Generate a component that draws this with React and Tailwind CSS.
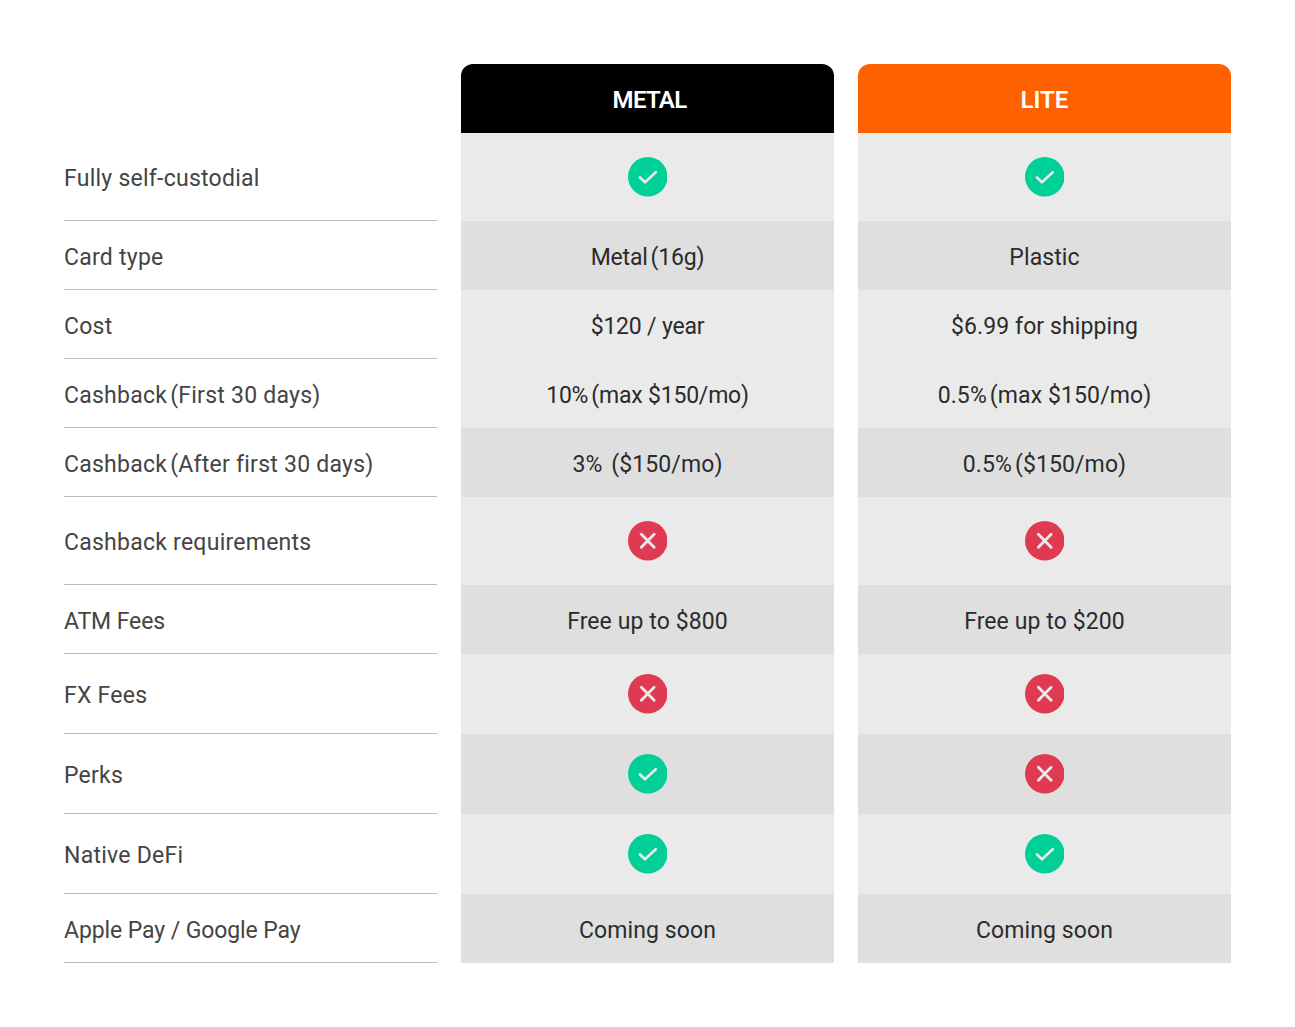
import React from 'react'

const rows = [
  { label: 'Fully self-custodial', metal: 'yes', lite: 'yes', h: 'h-[88px]', band: 'bg-[#eaeaea]' },
  { label: 'Card type', metal: 'Metal (16g)', lite: 'Plastic', h: 'h-[69px]', band: 'bg-[#dfdfdf]', tightMetal: true },
  { label: 'Cost', metal: '$120 / year', lite: '$6.99 for shipping', h: 'h-[69px]', band: 'bg-[#eaeaea]', tightMetal: true },
  { label: 'Cashback (First 30 days)', metal: '10% (max $150/mo)', lite: '0.5% (max $150/mo)', h: 'h-[69px]', band: 'bg-[#eaeaea]', tightMetal: true },
  { label: 'Cashback (After first 30 days)', metal: '3%  ($150/mo)', lite: '0.5% ($150/mo)', h: 'h-[69px]', band: 'bg-[#dfdfdf]' },
  { label: 'Cashback requirements', metal: 'no', lite: 'no', h: 'h-[88px]', band: 'bg-[#eaeaea]' },
  { label: 'ATM Fees', metal: 'Free up to $800', lite: 'Free up to $200', h: 'h-[69px]', band: 'bg-[#dfdfdf]', tightLabel: true },
  { label: 'FX Fees', metal: 'no', lite: 'no', h: 'h-[80px]', band: 'bg-[#eaeaea]' },
  { label: 'Perks', metal: 'yes', lite: 'no', h: 'h-[80px]', band: 'bg-[#dfdfdf]' },
  { label: 'Native DeFi', metal: 'yes', lite: 'yes', h: 'h-[80px]', band: 'bg-[#eaeaea]' },
  { label: 'Apple Pay / Google Pay', metal: 'Coming soon', lite: 'Coming soon', h: 'h-[69px]', band: 'bg-[#dfdfdf]', tightLabel: true },
]

const YesIcon = () => (
  <svg width="39.5" height="39.5" viewBox="0 0 39 39">
    <circle cx="19.5" cy="19.5" r="19.5" fill="#00cf98" />
    <path d="M11.8 20.2l5 4.8 10.6-10" fill="none" stroke="#eaeaea" strokeWidth="2.6" strokeLinecap="round" strokeLinejoin="round" />
  </svg>
)

const NoIcon = () => (
  <svg width="39.5" height="39.5" viewBox="0 0 39 39">
    <circle cx="19.5" cy="19.5" r="19.5" fill="#e03a52" />
    <path d="M13.2 13.2l12.6 12.6M25.8 13.2l-12.6 12.6" fill="none" stroke="#eaeaea" strokeWidth="2.8" strokeLinecap="round" />
  </svg>
)

// the space before a bracket is much tighter in the original type
const Text = ({ value }) => {
  const parts = value.split(' (')
  if (parts.length === 1) return <span>{value}</span>
  return (
    <span>
      {parts[0]}
      <span className="ml-[3px]">({parts[1]}</span>
    </span>
  )
}

const Cell = ({ value, h, band, tight }) => (
  <div className={`${h} ${band} flex items-center justify-center text-[23px] text-[#2b2b2b] whitespace-pre ${tight ? 'tracking-[-0.2px]' : 'tracking-[0.1px]'}`}>
    {value === 'yes' ? <YesIcon /> : value === 'no' ? <NoIcon /> : <span className="pt-[5px]"><Text value={value} /></span>}
  </div>
)

export default function App() {
  return (
    <div className="min-h-[1027px] bg-white pl-16 pt-16 font-['Roboto',sans-serif]">
      <div className="grid w-[1167px] grid-cols-[373px_373px_373px] gap-x-6">
        <div className="h-[69px]" />
        <div className="flex h-[69px] items-center justify-center rounded-t-xl bg-black pl-1 pt-[2px] text-2xl font-semibold tracking-[-0.7px] text-white">METAL</div>
        <div className="flex h-[69px] items-center justify-center rounded-t-xl bg-[#ff6000] pt-[2px] text-2xl font-semibold text-white">LITE</div>
        {rows.map((row) => (
          <React.Fragment key={row.label}>
            <div className={`${row.h} flex items-center border-b border-[#bbbbbb] pt-[6px] text-[23px] text-[#444444] ${row.tightLabel ? 'tracking-[-0.1px]' : 'tracking-[0.25px]'}`}>
              <Text value={row.label} />
            </div>
            <Cell value={row.metal} h={row.h} band={row.band} tight={row.tightMetal} />
            <Cell value={row.lite} h={row.h} band={row.band} />
          </React.Fragment>
        ))}
      </div>
    </div>
  )
}
